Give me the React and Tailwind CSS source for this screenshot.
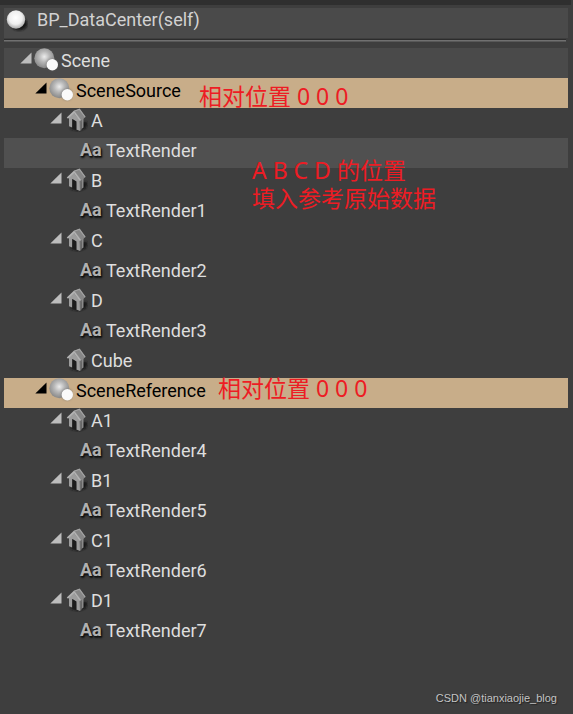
import React from 'react';
import clsx from 'clsx';

const items = [
    { name: 'Scene', level: 0, icon: 'scene', open: true, header: true },
    { name: 'SceneSource', level: 1, icon: 'scene', open: true, selected: true },
    { name: 'A', level: 2, icon: 'mesh', open: true },
    { name: 'TextRender', level: 3, icon: 'text', hovered: true },
    { name: 'B', level: 2, icon: 'mesh', open: true },
    { name: 'TextRender1', level: 3, icon: 'text' },
    { name: 'C', level: 2, icon: 'mesh', open: true },
    { name: 'TextRender2', level: 3, icon: 'text' },
    { name: 'D', level: 2, icon: 'mesh', open: true },
    { name: 'TextRender3', level: 3, icon: 'text' },
    { name: 'Cube', level: 2, icon: 'mesh' },
    { name: 'SceneReference', level: 1, icon: 'scene', open: true, selected: true },
    { name: 'A1', level: 2, icon: 'mesh', open: true },
    { name: 'TextRender4', level: 3, icon: 'text' },
    { name: 'B1', level: 2, icon: 'mesh', open: true },
    { name: 'TextRender5', level: 3, icon: 'text' },
    { name: 'C1', level: 2, icon: 'mesh', open: true },
    { name: 'TextRender6', level: 3, icon: 'text' },
    { name: 'D1', level: 2, icon: 'mesh', open: true },
    { name: 'TextRender7', level: 3, icon: 'text' }
];

// handwritten remarks lying over the tree
const notes = [
    { lines: ['相对位置 0 0 0'], place: 'top-[82px] left-[199px]' },
    { lines: ['A B C D 的位置', '填入参考原始数据'], place: 'top-[156px] left-[252px]' },
    { lines: ['相对位置 0 0 0'], place: 'top-[374px] left-[218px]' }
];

const indents = ['pl-4', 'pl-[31px]', 'pl-[46px]', 'pl-[61px]'];

// gradients shared by all the icons
const IconDefs = () => (
    <svg width="0" height="0" className="absolute" aria-hidden="true">
        <defs>
            <radialGradient id="ball" cx="50%" cy="42%" r="58%">
                <stop offset="0" stopColor="#ececec" />
                <stop offset="0.45" stopColor="#b8b8b8" />
                <stop offset="1" stopColor="#868686" />
            </radialGradient>
            <radialGradient id="whiteBall" cx="48%" cy="40%" r="60%">
                <stop offset="0" stopColor="#ffffff" />
                <stop offset="0.6" stopColor="#eeeeee" />
                <stop offset="1" stopColor="#a8a8a8" />
            </radialGradient>
            <filter id="soft" x="-30%" y="-30%" width="160%" height="160%">
                <feGaussianBlur stdDeviation="0.8" />
            </filter>
        </defs>
    </svg>
);

const ActorIcon = () => (
    <svg width="24" height="24" viewBox="0 0 24 24" className="shrink-0" aria-hidden="true">
        <ellipse cx="15" cy="16" rx="8.5" ry="6.5" fill="#161616" filter="url(#soft)" />
        <circle cx="12" cy="11.5" r="9.2" fill="url(#whiteBall)" />
    </svg>
);

const SceneIcon = () => (
    <svg width="24" height="24" viewBox="0 0 24 24" aria-hidden="true">
        <circle cx="10.3" cy="10.3" r="10" fill="url(#ball)" />
        <circle cx="18" cy="16.5" r="6" fill="#666666" opacity="0.5" filter="url(#soft)" />
        <circle cx="18.3" cy="16.8" r="5.7" fill="#fafafa" />
    </svg>
);

const MeshIcon = () => (
    <svg width="24" height="24" viewBox="0 0 24 24" aria-hidden="true">
        <path d="M13 14L23.5 14L22 20L15 23L6 21Z" fill="#161616" filter="url(#soft)" />
        <path d="M5 9L9.5 4.5L16 13V23L12.3 21.5V13.5L8.3 11V19.5L5 18.2Z" fill="#9c9c9c" />
        <path d="M8.3 11L12.3 13.5V21.5L8.3 19.5Z" fill="#1b1b1b" />
        <path d="M15.5 12L17.5 10.5V21.8L16 23Z" fill="#6e6e6e" />
        <path d="M17.5 9L19.5 9V19.5L17.5 21Z" fill="#8a8a8a" />
        <path d="M10 3L15.5 1L21.3 9.2L16.5 13Z" fill="#868686" />
        <path d="M3.4 10.2L10 3.8L16.3 12.6" fill="none" stroke="#b2b2b2" strokeWidth="1.8" />
        <path d="M10 3.3L15.5 1.3L21.2 9.2" fill="none" stroke="#a4a4a4" strokeWidth="1.2" />
    </svg>
);

const TextIcon = () => (
    <span
        aria-hidden="true"
        className="block pl-px text-lg leading-[23px] font-bold text-[#b0b0b0] [text-shadow:1px_1px_1px_#111,1px_2px_2px_#111]"
    >
        Aa
    </span>
);

const icons = { scene: SceneIcon, mesh: MeshIcon, text: TextIcon };

const TreeRow = ({ item }) => {
    const Icon = icons[item.icon];
    return (
        <li
            className={clsx(
                'flex h-[30px] items-start',
                indents[item.level],
                item.header && 'bg-[#4a4a4a]',
                item.hovered && 'bg-[#505050]',
                item.selected ? 'bg-[#c8ad89] text-black' : 'text-[#dedede]'
            )}
        >
            <span className="w-[14px] shrink-0 pt-1">
                {item.open && (
                    <button type="button" aria-label={`Collapse ${item.name}`} className="block">
                        <svg width="12" height="12" viewBox="0 0 12 12">
                            <path d="M11.5 0.5V11.5H0.3Z" fill={item.selected ? '#000000' : '#bdbdbd'} />
                        </svg>
                    </button>
                )}
            </span>
            <span className="w-[27px] shrink-0">
                <Icon />
            </span>
            <span className="leading-[26px]">{item.name}</span>
        </li>
    );
};

const Note = ({ note }) => (
    <div
        className={clsx(
            "absolute font-['Noto_Sans','Noto_Sans_CJK_SC',sans-serif] text-[23px] leading-7 whitespace-nowrap text-[#ed1c24]",
            note.place
        )}
    >
        {note.lines.map((line) => (
            <p key={line}>{line}</p>
        ))}
    </div>
);

const App = () => {
    return (
        <div className="relative min-h-screen bg-[#3e3e3e] font-[Roboto,sans-serif] text-lg">
            <IconDefs />
            <div className="mr-0.5 h-[5px] bg-[#2f2f2f]"></div>

            <div className="pt-[3px] pr-[5px] pl-1">
                {/* root actor */}
                <header className="flex h-[30px] items-start bg-[#4a4a4a] text-[#d2d2d2]">
                    <ActorIcon />
                    <h1 className="pl-[9px] leading-6">BP_DataCenter(self)</h1>
                </header>
                <div className="mt-px mr-0.5 h-[3px] border-t border-b border-t-[#2c2c2c] border-b-[#585858] bg-[#707070]"></div>

                {/* component tree */}
                <ul className="mt-1.5 pb-16">
                    {items.map((item) => (
                        <TreeRow key={item.name} item={item} />
                    ))}
                </ul>
            </div>

            {notes.map((note) => (
                <Note key={note.place} note={note} />
            ))}

            <footer className="absolute right-4 bottom-2 font-['Liberation_Sans',sans-serif] text-[11px] leading-4 text-[#c4c4c4] [text-shadow:1px_1px_1px_#222]">
                CSDN @tianxiaojie_blog
            </footer>
        </div>
    );
};

export default App;
